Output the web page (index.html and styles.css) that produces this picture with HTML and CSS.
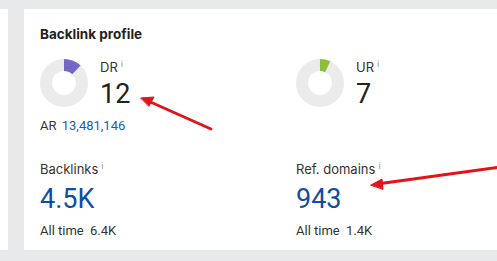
FILE: index.html
```html
<!DOCTYPE html>
<html lang="en">
<head>
    <meta charset="UTF-8">
    <title>Backlink profile</title>
    <link rel="stylesheet" href="styles.css">
</head>
<body>
<div class="page">
    <div class="side"></div>
    <div class="card">
        <h3 class="title">Backlink profile</h3>
        <div class="grid">
            <div class="cell">
                <div class="rating">
                    <svg class="donut" width="48" height="48" viewBox="0 0 48 48">
                        <circle cx="24" cy="24" r="18" fill="none" stroke="#ebebeb" stroke-width="12"/>
                        <circle cx="24" cy="24" r="18" fill="none" stroke="#7466c7" stroke-width="12"
                                stroke-dasharray="13.6 113.1" transform="rotate(-90 24 24)"/>
                    </svg>
                    <div>
                        <div class="label">DR<sup>i</sup></div>
                        <div class="big">12</div>
                    </div>
                </div>
                <div class="sub">AR <a class="num">13,481,146</a></div>
            </div>
            <div class="cell">
                <div class="rating">
                    <svg class="donut" width="48" height="48" viewBox="0 0 48 48">
                        <circle cx="24" cy="24" r="18" fill="none" stroke="#ebebeb" stroke-width="12"/>
                        <circle cx="24" cy="24" r="18" fill="none" stroke="#8cbd3b" stroke-width="12"
                                stroke-dasharray="7.9 113.1" transform="rotate(-90 24 24)"/>
                    </svg>
                    <div>
                        <div class="label">UR<sup>i</sup></div>
                        <div class="big">7</div>
                    </div>
                </div>
            </div>
            <div class="cell">
                <div class="label">Backlinks<sup>i</sup></div>
                <div class="big blue">4.5K</div>
                <div class="sub">All time <span>6.4K</span></div>
            </div>
            <div class="cell">
                <div class="label">Ref. domains<sup>i</sup></div>
                <div class="big blue">943</div>
                <div class="sub">All time <span>1.4K</span></div>
            </div>
        </div>
    </div>
</div>

<!-- annotation arrows -->
<svg class="arrows" width="497" height="261" viewBox="0 0 497 261">
    <g stroke="#e01419" stroke-width="3" fill="#e01419" stroke-linecap="round">
        <line x1="211" y1="129" x2="146" y2="100"/>
        <polygon points="141,98 154,97 149,106" stroke-width="1" stroke-linejoin="round"/>
        <line x1="500" y1="167" x2="377" y2="184"/>
        <polygon points="371,185 382,179 383,189" stroke-width="1" stroke-linejoin="round"/>
    </g>
</svg>
</body>
</html>
```

FILE: styles.css
```css
body { margin: 0; background: #e8e9eb; font-family: Roboto, "Noto Sans", sans-serif; color: #333; }
.page { display: flex; gap: 16px; padding-top: 9px; height: 241px; }
.side { width: 8px; background: #fff; }
.card { flex: 1; background: #fff; padding: 17px 16px 0; }
.title { margin: 0; font-family: Inter, sans-serif; font-size: 13.5px; line-height: 16px; font-weight: 700; color: #222; }
.grid { display: grid; grid-template-columns: 256px 1fr; row-gap: 27px; margin-top: 17px; }
.rating { display: flex; gap: 12px; }
.donut { display: block; }
.label { font-family: Inter, sans-serif; font-size: 13px; line-height: 16px; color: #333; }
.label sup { font-size: 9px; color: #999; margin-left: 3px; vertical-align: 5px; line-height: 0; }
.big { font-size: 27px; line-height: 32px; color: #222; margin-top: 3px; }
.big.blue { color: #0f4ea3; margin-top: 6px; }
.sub { font-size: 13px; line-height: 16px; color: #333; margin-top: 8px; }
.sub .num { color: #1c5cb5; margin-left: 2px; }
.sub span { margin-left: 3px; }
.arrows { position: absolute; left: 0; top: 0; pointer-events: none; }
```
